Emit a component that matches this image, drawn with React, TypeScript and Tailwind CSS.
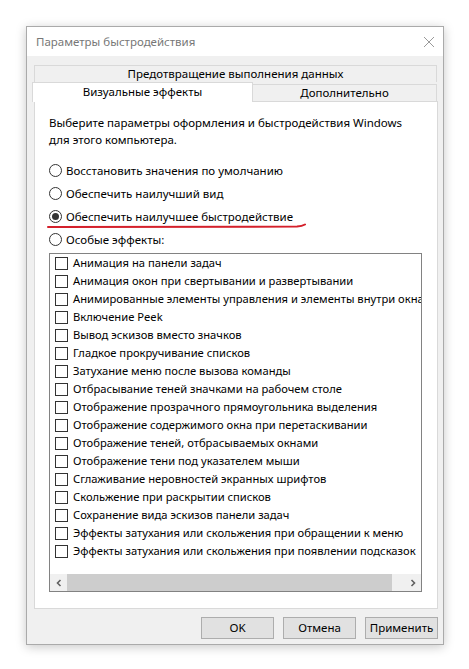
import React from "react";

const font = { fontFamily: '"Noto Sans", "Open Sans", sans-serif' };

const effects = [
  "Анимация на панели задач",
  "Анимация окон при свертывании и развертывании",
  "Анимированные элементы управления и элементы внутри окна",
  "Включение Peek",
  "Вывод эскизов вместо значков",
  "Гладкое прокручивание списков",
  "Затухание меню после вызова команды",
  "Отбрасывание теней значками на рабочем столе",
  "Отображение прозрачного прямоугольника выделения",
  "Отображение содержимого окна при перетаскивании",
  "Отображение теней, отбрасываемых окнами",
  "Отображение тени под указателем мыши",
  "Сглаживание неровностей экранных шрифтов",
  "Скольжение при раскрытии списков",
  "Сохранение вида эскизов панели задач",
  "Эффекты затухания или скольжения при обращении к меню",
  "Эффекты затухания или скольжения при появлении подсказок",
];

const radios = [
  { label: "Восстановить значения по умолчанию", checked: false },
  { label: "Обеспечить наилучший вид", checked: false },
  { label: "Обеспечить наилучшее быстродействие", checked: true },
  { label: "Особые эффекты:", checked: false },
];

function Radio({ label, checked }: { label: string; checked: boolean }) {
  return (
    <div className="flex items-center h-[23px]">
      <div className="w-[13px] h-[13px] rounded-full border border-[#333333] bg-white flex items-center justify-center">
        {checked && <div className="w-[7px] h-[7px] rounded-full bg-[#333333]"></div>}
      </div>
      <span className="ml-[4px] whitespace-nowrap">{label}</span>
    </div>
  );
}

function Button({ label }: { label: string }) {
  return (
    <div className="h-[22px] w-[73px] bg-[#e1e1e1] border border-[#adadad] flex items-center justify-center">
      {label}
    </div>
  );
}

export default function App() {
  return (
    <div
      className="w-[469px] h-[669px] bg-white pt-[26px] pl-[26px] text-[11.5px] text-black"
      style={font}
    >
      <div className="w-[418px] h-[619px] border border-[#aaaaaa] bg-[#f0f0f0] flex flex-col shadow-[0_2px_10px_rgba(0,0,0,0.22)]">
        {/* заголовок */}
        <div className="h-[29px] bg-white flex items-center justify-between pl-[9px] pr-[8px]">
          <span className="text-[#777777] text-[11.5px]">Параметры быстродействия</span>
          <svg width="12" height="12" viewBox="0 0 12 12">
            <path d="M1 1 L11 11 M11 1 L1 11" stroke="#9a9a9a" strokeWidth="1" />
          </svg>
        </div>

        <div className="pt-[9px] pl-[7px]">
          {/* вкладки */}
          <div className="w-[403px]">
            <div className="h-[17px] border-t border-x border-[#d9d9d9] flex items-center justify-center">
              Предотвращение выполнения данных
            </div>
            <div className="h-[19px] flex items-start">
              <div className="relative z-10 -ml-[2px] w-[221px] h-[20px] bg-white border-t border-x border-[#d9d9d9] flex items-center justify-center pb-[2px]">
                Визуальные эффекты
              </div>
              <div className="mt-[2px] flex-1 h-[17px] border-t border-r border-[#d9d9d9] flex items-center justify-center">
                Дополнительно
              </div>
            </div>
          </div>

          {/* панель */}
          <div className="w-[404px] h-[508px] bg-white border border-[#d9d9d9] pl-[14px] pt-[12px]">
            <p className="leading-[17px] whitespace-nowrap">
              Выберите параметры оформления и быстродействия Windows
              <br />
              для этого компьютера.
            </p>

            <div className="relative mt-[11px]">
              {radios.map((r) => (
                <Radio key={r.label} label={r.label} checked={r.checked} />
              ))}
              <svg
                className="absolute left-[-2px] top-[64px]"
                width="260"
                height="6"
                viewBox="0 0 260 6"
              >
                <path
                  d="M1 4 L250 3.6 Q255 3.4 258 1.5"
                  stroke="#d4202b"
                  strokeWidth="2"
                  fill="none"
                  strokeLinecap="round"
                />
              </svg>
            </div>

            {/* список эффектов */}
            <div className="mt-[2px] w-[373px] h-[339px] border border-[#828282] flex flex-col">
              <div className="h-[320px] overflow-hidden text-[11.2px]">
                {effects.map((e) => (
                  <div key={e} className="h-[18px] flex items-center pl-[5px]">
                    <div className="w-[13px] h-[13px] shrink-0 border border-[#333333] bg-white"></div>
                    <span className="ml-[5px] whitespace-nowrap">{e}</span>
                  </div>
                ))}
              </div>
              <div className="h-[17px] flex bg-[#f0f0f0]">
                <div className="w-[17px] flex items-center justify-center">
                  <svg width="8" height="8" viewBox="0 0 8 8">
                    <path d="M5.5 1 L2.5 4 L5.5 7" stroke="#606060" strokeWidth="1.6" fill="none" />
                  </svg>
                </div>
                <div className="flex-1 flex">
                  <div className="w-[325px] bg-[#cdcdcd]"></div>
                </div>
                <div className="w-[17px] flex items-center justify-center">
                  <svg width="8" height="8" viewBox="0 0 8 8">
                    <path d="M2.5 1 L5.5 4 L2.5 7" stroke="#606060" strokeWidth="1.6" fill="none" />
                  </svg>
                </div>
              </div>
            </div>
          </div>

          {/* кнопки */}
          <div className="w-[404px] mt-[8px] flex justify-end gap-[9px]">
            <Button label="OK" />
            <Button label="Отмена" />
            <Button label="Применить" />
          </div>
        </div>
      </div>
    </div>
  );
}
